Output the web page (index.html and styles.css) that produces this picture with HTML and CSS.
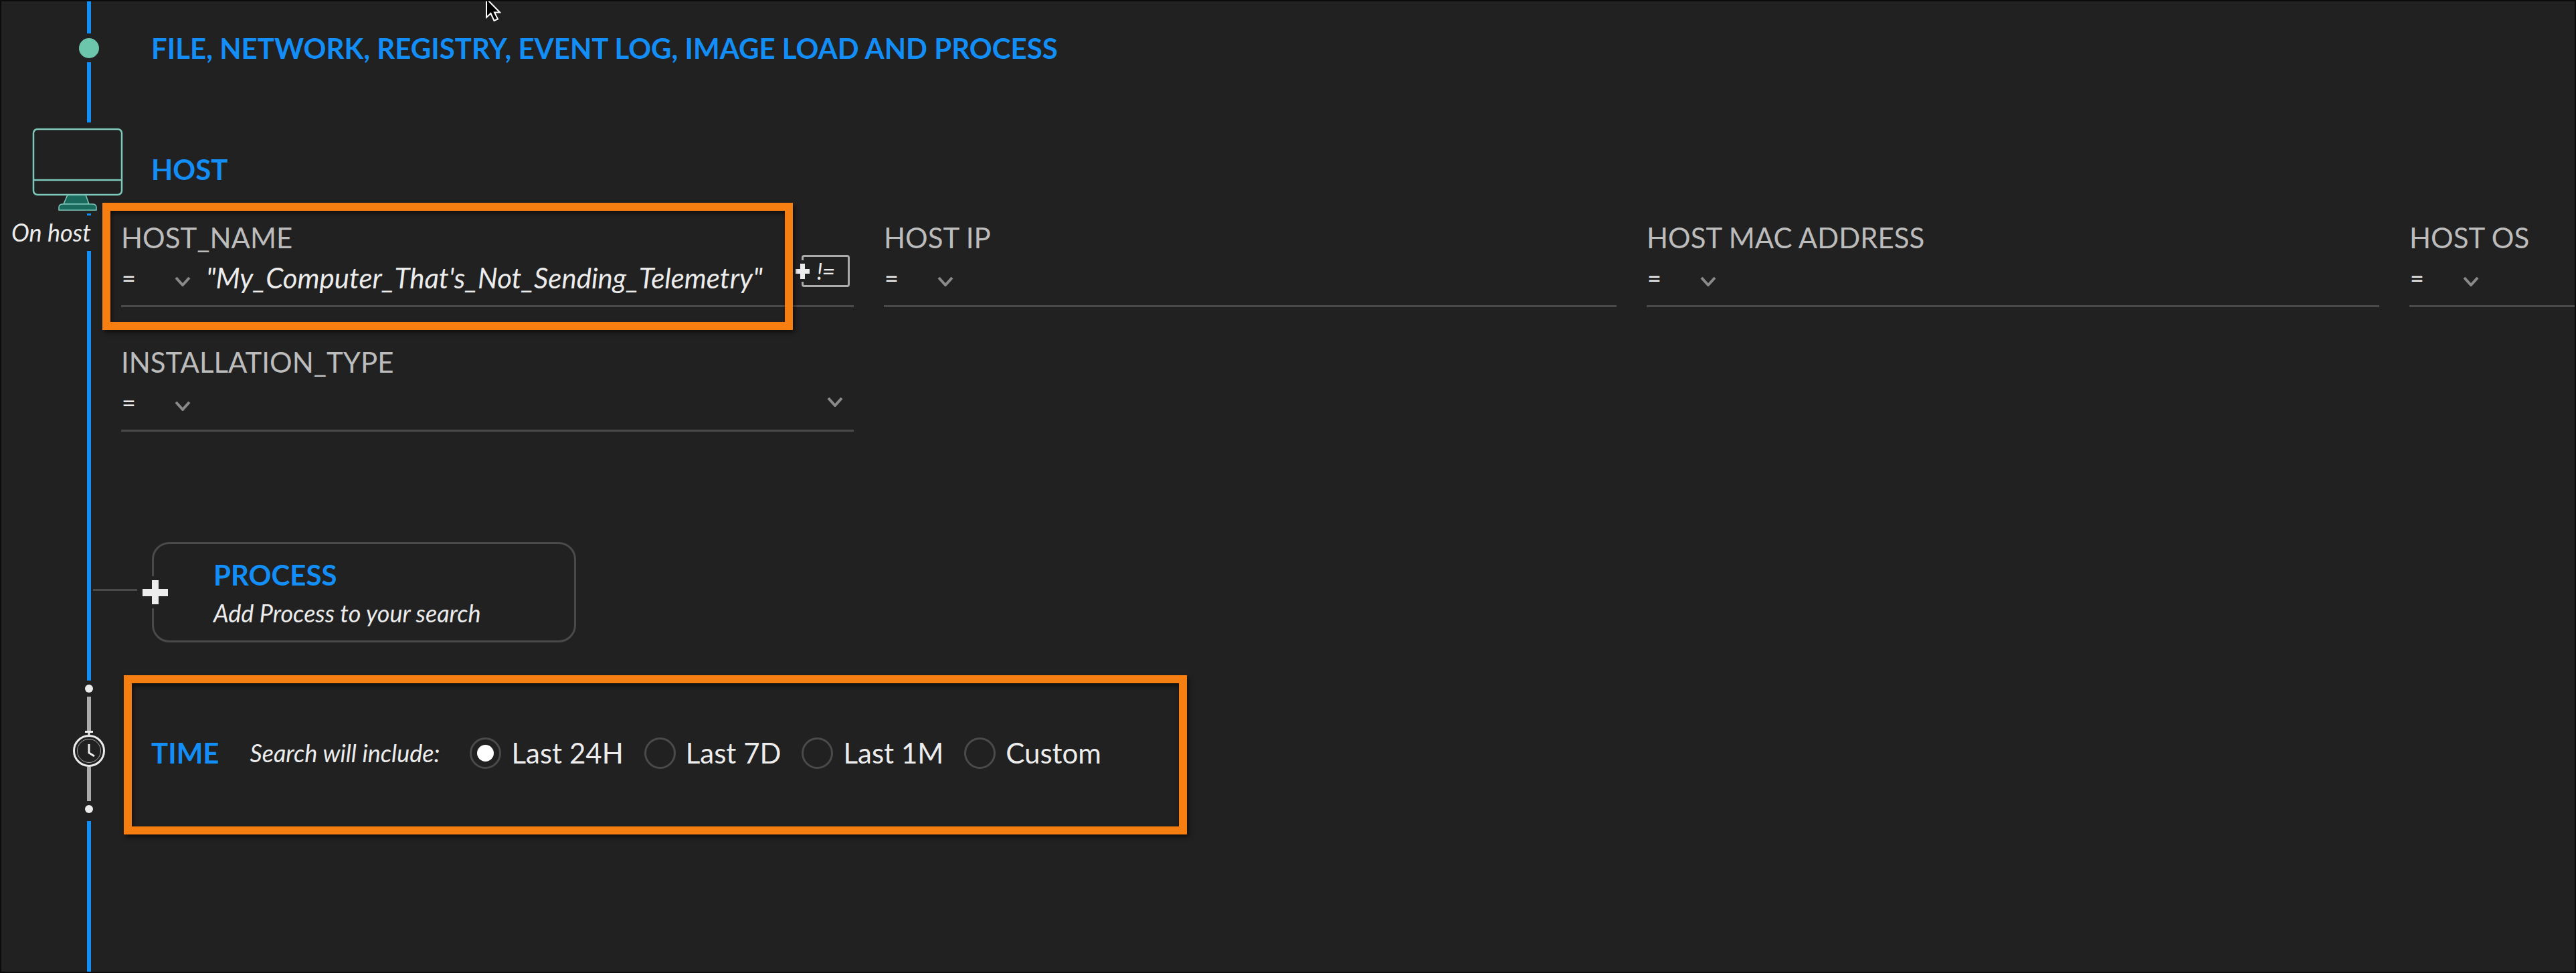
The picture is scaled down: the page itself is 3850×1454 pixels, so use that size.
FILE: index.html

```html
<!DOCTYPE html>
<html lang="en">
<head>
  <meta charset="UTF-8">
  <title>Search</title>
  <link rel="stylesheet" href="styles.css">
</head>
<body>
  <div class="page">
    <div class="rail">
      <div class="seg seg-a"></div>
      <div class="node"></div>
      <div class="seg seg-b"></div>
      <svg class="monitor" width="136" height="124" viewBox="0 0 136 124">
        <path class="stand" d="M52 99 L46 113 H84 L79 99 Z"/>
        <path class="stand" d="M39 122 V118 Q39 113 45 113 H89 Q95 113 95 118 V122 Z"/>
        <rect class="screen" x="1" y="1" width="132" height="98" rx="6"/>
        <line class="screen" x1="1" y1="77" x2="133" y2="77"/>
      </svg>
      <div class="seg seg-c"></div>
      <div class="on-host">On host</div>
      <div class="seg seg-d"></div>
      <div class="knob"></div>
      <div class="seg seg-gray seg-e"></div>
      <svg class="clock" width="50" height="54" viewBox="0 0 50 54">
        <path class="clock-cap" d="M19 1.5 H31 M25 1.5 V6"/>
        <circle class="clock-ring" cx="25" cy="30" r="22.5"/>
        <circle class="clock-inner" cx="25" cy="30" r="17.5"/>
        <path class="clock-hand" d="M25 20 V33 L33 38"/>
      </svg>
      <div class="seg seg-gray seg-f"></div>
      <div class="knob"></div>
      <div class="seg seg-g"></div>
    </div>

    <div class="main">
      <div class="heading top-heading">FILE, NETWORK, REGISTRY, EVENT LOG, IMAGE LOAD AND PROCESS</div>
      <div class="heading host-heading">HOST</div>

      <div class="fields">
        <div class="field">
          <div class="field-label">HOST_NAME</div>
          <div class="field-row">
            <span class="op">=</span>
            <svg class="chev" width="24" height="14" viewBox="0 0 24 14"><path d="M2 1 L12 12 L22 1"/></svg>
            <span class="value">"My_Computer_That's_Not_Sending_Telemetry"</span>
            <div class="neq-btn">
              <span class="plus-gap">
                <svg width="21" height="23" viewBox="0 0 21 23"><path d="M7 0 H14 V8 H21 V15 H14 V23 H7 V15 H0 V8 H7 Z"/></svg>
              </span>
              <span class="neq-text">!=</span>
            </div>
          </div>
        </div>
        <div class="field">
          <div class="field-label">HOST IP</div>
          <div class="field-row">
            <span class="op">=</span>
            <svg class="chev" width="24" height="14" viewBox="0 0 24 14"><path d="M2 1 L12 12 L22 1"/></svg>
          </div>
        </div>
        <div class="field">
          <div class="field-label">HOST MAC ADDRESS</div>
          <div class="field-row">
            <span class="op">=</span>
            <svg class="chev" width="24" height="14" viewBox="0 0 24 14"><path d="M2 1 L12 12 L22 1"/></svg>
          </div>
        </div>
        <div class="field">
          <div class="field-label">HOST OS</div>
          <div class="field-row">
            <span class="op">=</span>
            <svg class="chev" width="24" height="14" viewBox="0 0 24 14"><path d="M2 1 L12 12 L22 1"/></svg>
          </div>
        </div>
        <div class="field">
          <div class="field-label">INSTALLATION_TYPE</div>
          <div class="field-row">
            <span class="op">=</span>
            <svg class="chev" width="24" height="14" viewBox="0 0 24 14"><path d="M2 1 L12 12 L22 1"/></svg>
            <svg class="chev chev-end" width="24" height="14" viewBox="0 0 24 14"><path d="M2 1 L12 12 L22 1"/></svg>
          </div>
        </div>
      </div>

      <div class="add-card">
        <span class="plus-gap plus-gap-big">
          <svg width="38" height="36" viewBox="0 0 38 36"><path d="M14 0 H24 V13 H38 V24 H24 V36 H14 V24 H0 V13 H14 Z"/></svg>
        </span>
        <div class="heading">PROCESS</div>
        <div class="add-sub">Add Process to your search</div>
      </div>

      <div class="time-row">
        <div class="heading">TIME</div>
        <div class="time-note">Search will include:</div>
        <div class="radios">
          <label class="radio radio-on"><span class="radio-dot"></span>Last 24H</label>
          <label class="radio"><span class="radio-dot"></span>Last 7D</label>
          <label class="radio"><span class="radio-dot"></span>Last 1M</label>
          <label class="radio"><span class="radio-dot"></span>Custom</label>
        </div>
      </div>
    </div>

    <div class="callout callout-host"></div>
    <div class="callout callout-time"></div>

    <svg class="cursor" width="24" height="34" viewBox="0 0 24 34">
      <path d="M2 -2 V26 L8.5 20 L13.5 31 L19 28.5 L14 18.5 H22 Z"/>
    </svg>
  </div>
</body>
</html>
```

FILE: styles.css

```css
html, body {
  margin: 0;
  height: 100%;
  background: #212121;
}
.page {
  position: relative;
  display: flex;
  box-sizing: border-box;
  width: 3850px;
  height: 1454px;
  border: 2px solid #0b0b0b;
  background: #212121;
  font-family: "Lato", "Liberation Sans", sans-serif;
  color: #ececec;
  overflow: hidden;
}

/* left timeline */
.rail {
  display: flex;
  flex-direction: column;
  flex: none;
  width: 148px;
}
.seg {
  flex: none;
  width: 6px;
  margin-left: 128px;
  background: #138ef7;
}
.seg-a { height: 48px; }
.seg-b { height: 90px; margin-top: 6px; }
.seg-c { height: 3px; margin-top: 3px; }
.seg-d { height: 642px; margin-top: 4px; }
.seg-gray { background: #ababab; }
.seg-e { height: 51px; }
.seg-f { height: 51px; }
.seg-g { flex: 1; margin-top: 6px; }
.node {
  flex: none;
  width: 30px;
  height: 30px;
  margin: 7px 0 0 116px;
  border-radius: 50%;
  background: #6cc6ab;
}
.monitor {
  flex: none;
  margin: 9px 0 0 47px;
  overflow: visible;
}
.screen {
  fill: none;
  stroke: #7cc8bb;
  stroke-width: 2.5;
}
.stand {
  fill: #1b6a5e;
  stroke: #7cc8bb;
  stroke-width: 1.5;
}
.on-host {
  flex: none;
  height: 48px;
  margin: 1px 0 0 15px;
  font-size: 36px;
  font-style: italic;
  line-height: 48px;
  white-space: nowrap;
}
.knob {
  flex: none;
  width: 12px;
  height: 12px;
  margin: 6px 0 6px 125px;
  border-radius: 50%;
  background: #ececec;
}
.clock {
  flex: none;
  margin-left: 106px;
}
.clock-cap, .clock-hand {
  fill: none;
  stroke: #ececec;
  stroke-width: 3;
}
.clock-ring {
  fill: none;
  stroke: #ececec;
  stroke-width: 3;
}
.clock-inner {
  fill: none;
  stroke: #a8a8a8;
  stroke-width: 1;
}

/* main column */
.main {
  flex: 1;
  min-width: 0;
}
.heading {
  color: #138ef7;
  font-size: 42px;
  font-weight: 700;
  line-height: 50px;
  white-space: nowrap;
}
.top-heading { margin: 45px 0 0 76px; }
.host-heading { margin: 131px 0 0 76px; }

.fields {
  display: grid;
  grid-template-columns: repeat(4, 1095px);
  column-gap: 45px;
  row-gap: 57px;
  margin: 52px 0 0 31px;
}
.field {
  display: flex;
  flex-direction: column;
  height: 126px;
  border-bottom: 3px solid #4a4a4a;
}
.field-label {
  height: 50px;
  color: #bcbcbc;
  font-size: 42px;
  line-height: 50px;
  white-space: nowrap;
}
.field-row {
  display: flex;
  align-items: center;
  height: 58px;
  margin-top: 6px;
}
.op {
  width: 80px;
  padding-left: 1px;
  box-sizing: border-box;
  font-size: 36px;
}
.chev {
  flex: none;
  margin-top: 12px;
}
.chev path {
  fill: none;
  stroke: #8a8a8a;
  stroke-width: 4;
}
.chev-end {
  margin: 0 16px 0 auto;
}
.value {
  margin-left: 23px;
  font-size: 42px;
  font-style: italic;
  white-space: nowrap;
}
.neq-btn {
  position: relative;
  display: flex;
  align-items: center;
  justify-content: center;
  box-sizing: border-box;
  flex: none;
  width: 72px;
  height: 48px;
  margin: -20px 6px 0 auto;
  border: 3px solid #ababab;
  border-radius: 4px;
}
.neq-text {
  font-size: 34px;
  font-style: italic;
  letter-spacing: -1px;
  line-height: 1;
}
.plus-gap {
  position: absolute;
  left: -12px;
  top: 5px;
  display: flex;
  align-items: center;
  width: 21px;
  height: 32px;
  background: #212121;
}
.plus-gap svg {
  display: block;
  fill: #ececec;
}

.add-card {
  position: relative;
  display: flex;
  flex-direction: column;
  justify-content: center;
  box-sizing: border-box;
  width: 634px;
  height: 150px;
  margin: 165px 0 0 77px;
  padding: 2px 0 0 89px;
  border: 3px solid #4a4a4a;
  border-radius: 26px;
}
.add-card::before {
  content: "";
  position: absolute;
  left: -91px;
  top: 67px;
  width: 66px;
  height: 3px;
  background: #4a4a4a;
}
.plus-gap-big {
  left: -17px;
  top: 48px;
  width: 38px;
  height: 48px;
}
.add-sub {
  margin-top: 10px;
  font-size: 36px;
  font-style: italic;
  line-height: 44px;
  white-space: nowrap;
}

.time-row {
  display: flex;
  align-items: center;
  height: 60px;
  margin: 135px 0 0 76px;
}
.time-note {
  margin-left: 46px;
  font-size: 36px;
  font-style: italic;
  white-space: nowrap;
}
.radios {
  display: flex;
  gap: 31px;
  margin-left: 45px;
}
.radio {
  display: flex;
  align-items: center;
  gap: 15px;
  font-size: 42px;
  white-space: nowrap;
}
.radio-dot {
  position: relative;
  flex: none;
  box-sizing: border-box;
  width: 47px;
  height: 47px;
  border: 3px solid #4a4a4a;
  border-radius: 50%;
}
.radio-on .radio-dot::after {
  content: "";
  position: absolute;
  left: 8px;
  top: 8px;
  width: 25px;
  height: 25px;
  border-radius: 50%;
  background: #fff;
}

/* annotations drawn on top of the screenshot */
.callout {
  position: absolute;
  box-sizing: border-box;
  border: 12px solid #f77e11;
  box-shadow: 3px 4px 6px rgba(0, 0, 0, 0.55), inset 2px 4px 6px rgba(0, 0, 0, 0.55);
}
.callout-host {
  left: 151px;
  top: 301px;
  width: 1032px;
  height: 190px;
}
.callout-time {
  left: 183px;
  top: 1007px;
  width: 1589px;
  height: 238px;
}
.cursor {
  position: absolute;
  left: 723px;
  top: -2px;
  fill: #000;
  stroke: #fff;
  stroke-width: 2;
}
```
